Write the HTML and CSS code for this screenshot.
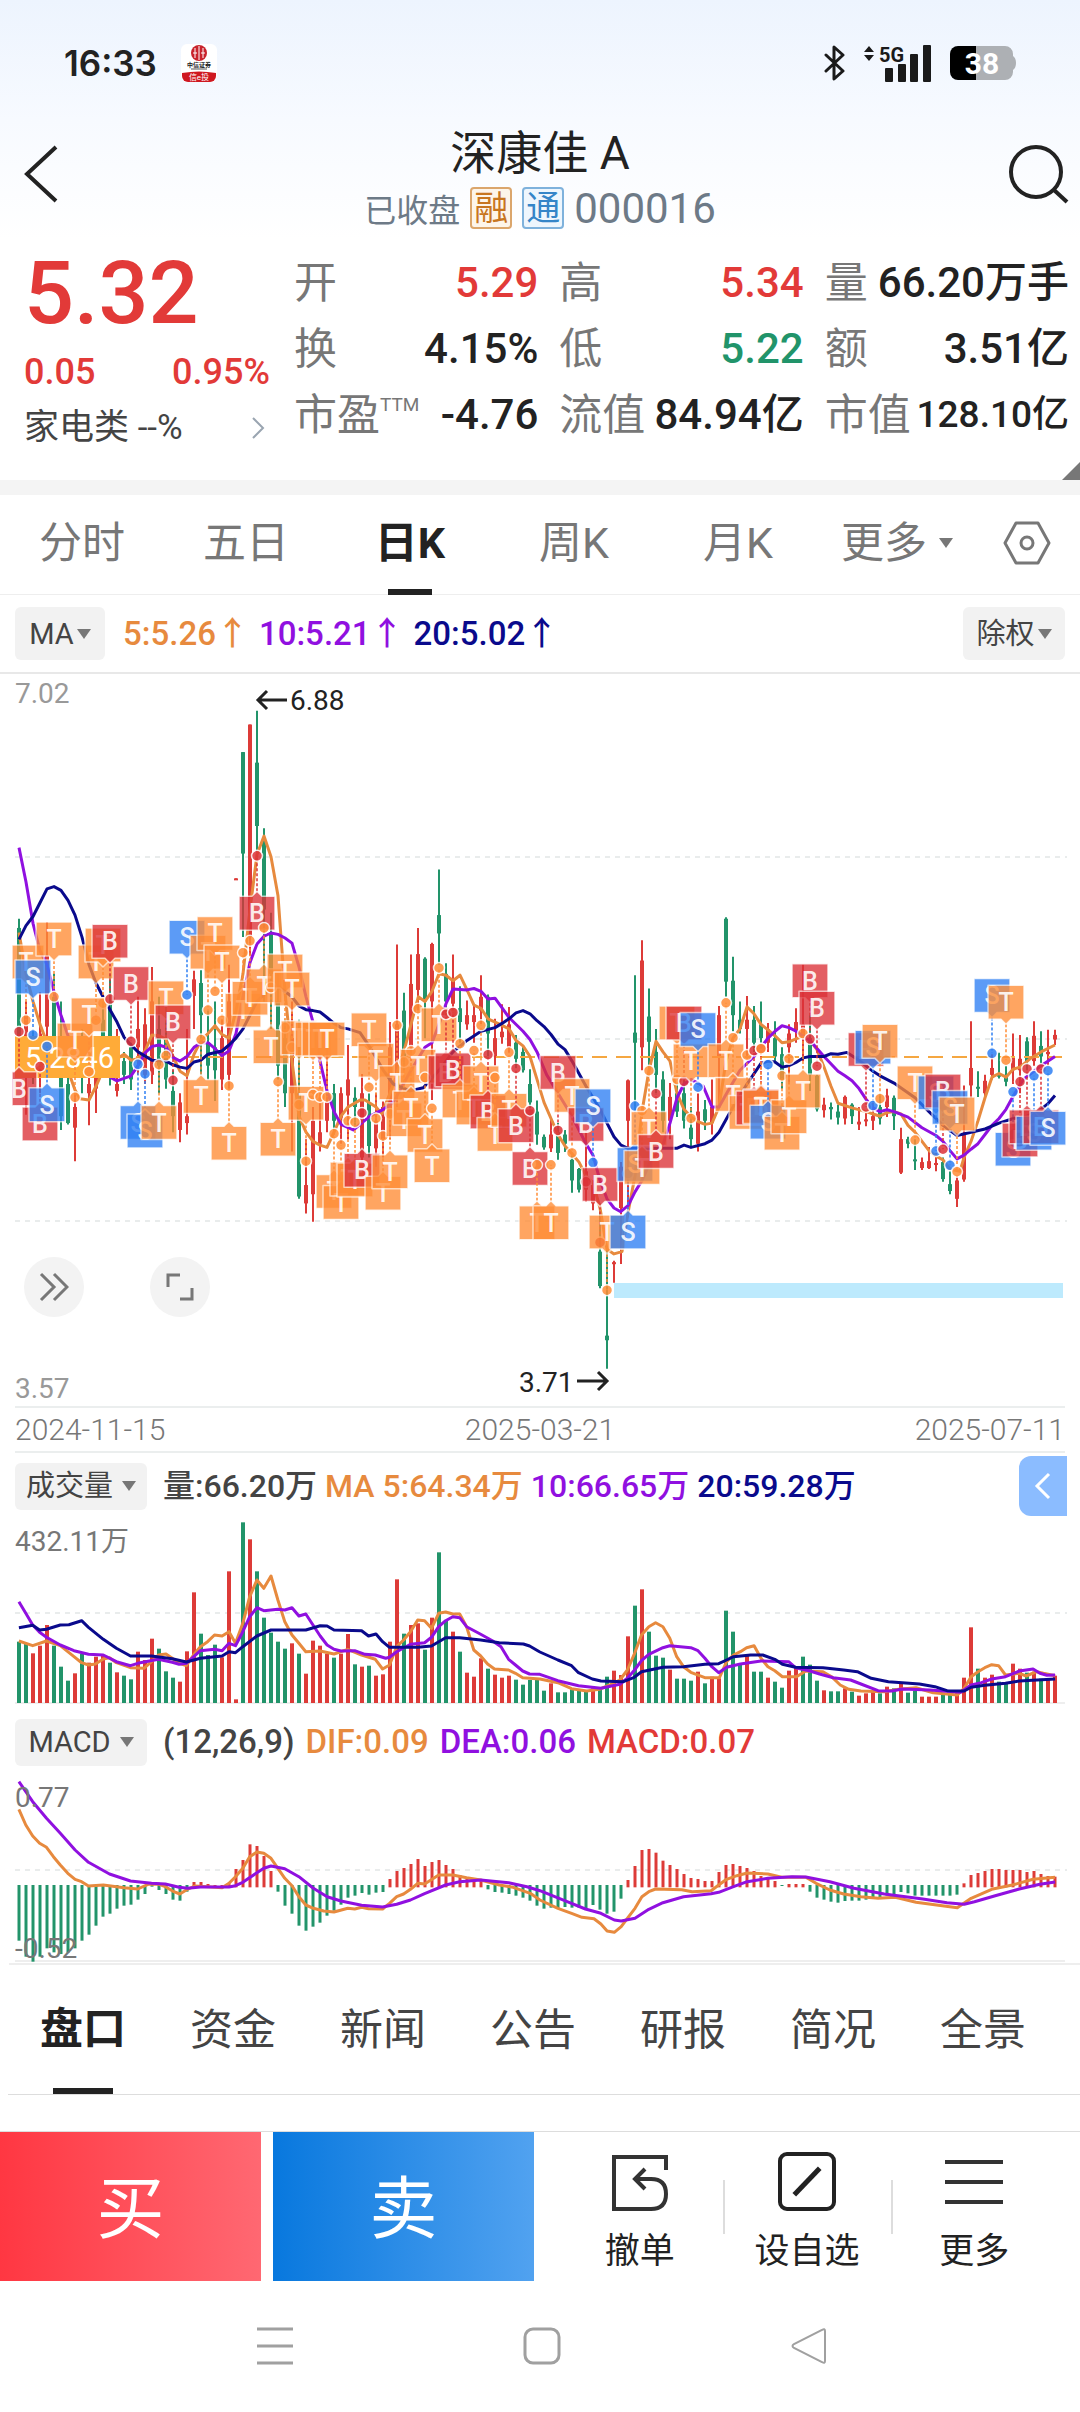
FILE: index.html
```html
<!DOCTYPE html>
<html lang="zh-CN">
<head>
<meta charset="utf-8">
<meta name="viewport" content="width=device-width, initial-scale=1">
<title>深康佳A 000016</title>
<link rel="stylesheet" href="styles.css">
</head>
<body>
<div class="status">
  <span class="clock">16:33</span>
  <svg class="app-logo" viewBox="0 0 36 38" width="36" height="38" aria-hidden="true">
    <rect width="36" height="38" rx="6" fill="#fff"/>
    <circle cx="18" cy="9" r="8" fill="#c8232c"/>
    <path d="M14 4v10M18 2v14M22 4v10M12 9h4M20 9h4" stroke="#fff" stroke-width="1"/>
    <text x="18" y="23" font-size="6" text-anchor="middle" font-weight="700" fill="#222">中信证券</text>
    <path d="M10 25h16" stroke="#555" stroke-width="1"/>
    <path d="M1 29q17 -3 34 0v3a6 6 0 0 1-6 6H7a6 6 0 0 1-6-6z" fill="#cf1820"/>
    <text x="18" y="36" font-size="8" text-anchor="middle" fill="#fff">信e投</text>
  </svg>
  <div class="status-right">
    <svg viewBox="0 0 22 38" width="22" height="38" aria-hidden="true"><path d="M2 11l17 16-9 8V3l9 8L2 27" fill="none" stroke="#1a1a1a" stroke-width="3" stroke-linejoin="round" stroke-linecap="round"/></svg>
    <svg viewBox="0 0 68 38" width="68" height="38" aria-hidden="true">
      <path d="M0 8h10L5 2zM0 11h10L5 17z" fill="#1a1a1a"/>
      <text x="15" y="18" font-size="20" font-weight="700" fill="#1a1a1a">5G</text>
      <g fill="#1a1a1a"><rect x="21" y="24" width="8" height="14" rx="1"/><rect x="34" y="20" width="8" height="18" rx="1"/><rect x="46" y="10" width="8" height="28" rx="1"/><rect x="59" y="1" width="8" height="37" rx="1"/></g>
    </svg>
    <svg viewBox="0 0 66 34" width="66" height="34" aria-hidden="true">
      <path d="M26 0h29a8 8 0 0 1 8 8v2q3 2 3 7t-3 7v2a8 8 0 0 1-8 8H26z" fill="#adb0b4"/>
      <path d="M26 0H8a8 8 0 0 0-8 8v18a8 8 0 0 0 8 8h18z" fill="#000"/>
      <text x="32" y="28" font-size="30" font-weight="700" text-anchor="middle" fill="#fff">38</text>
    </svg>
  </div>
</div>

<header class="header">
  <button class="icon-btn" aria-label="返回"><svg viewBox="0 0 34 58" width="34" height="58"><path d="M32 2L3 29l29 27" fill="none" stroke="#222" stroke-width="4"/></svg></button>
  <div class="heading">
    <h1>深康佳 A</h1>
    <p class="sub"><span class="state">已收盘</span><span class="tag tag-rong">融</span><span class="tag tag-tong">通</span><span class="code">000016</span></p>
  </div>
  <button class="icon-btn" aria-label="搜索"><svg viewBox="0 0 62 60" width="62" height="60"><circle cx="28" cy="28" r="25" fill="none" stroke="#222" stroke-width="4"/><path d="M46 46l13 12" stroke="#222" stroke-width="4"/></svg></button>
</header>

<section class="quote">
  <div class="last">
    <strong class="price up">5.32</strong>
    <div class="change up"><span>0.05</span><span>0.95%</span></div>
    <a class="sector" href="#sector">家电类 --%<svg viewBox="0 0 16 24" width="16" height="24" aria-hidden="true"><path d="M3 2l10 10L3 22" fill="none" stroke="#9aa5b1" stroke-width="2"/></svg></a>
  </div>
  <dl class="stats">
    <div><dt>开</dt><dd class="up">5.29</dd></div>
    <div><dt>高</dt><dd class="up">5.34</dd></div>
    <div><dt>量</dt><dd>66.20万手</dd></div>
    <div><dt>换</dt><dd>4.15%</dd></div>
    <div><dt>低</dt><dd class="down">5.22</dd></div>
    <div><dt>额</dt><dd>3.51亿</dd></div>
    <div><dt>市盈<sup>TTM</sup></dt><dd>-4.76</dd></div>
    <div><dt>流值</dt><dd>84.94亿</dd></div>
    <div><dt>市值</dt><dd class="long">128.10亿</dd></div>
  </dl>
</section>

<nav class="periods">
  <button>分时</button><button>五日</button><button class="on">日K</button><button>周K</button><button>月K</button>
  <button class="more">更多<i class="caret"></i></button>
  <button class="gear" aria-label="图表设置"><svg viewBox="0 0 48 44" width="48" height="44"><path d="M13 2h22l11 20-11 20H13L2 22z" fill="none" stroke="#777" stroke-width="3" stroke-linejoin="round"/><circle cx="24" cy="22" r="6" fill="none" stroke="#777" stroke-width="3"/></svg></button>
</nav>

<div class="indicator ma-row">
  <button class="pick tall">MA<i class="caret"></i></button>
  <span class="c-orange">5:5.26↑</span><span class="c-purple">10:5.21↑</span><span class="c-navy">20:5.02↑</span>
  <button class="pick tall last-pick">除权<i class="caret"></i></button>
</div>

<div class="chart-wrap">
  <svg id="kline" class="chart" viewBox="0 0 1080 732" role="img" aria-label="日K线图"></svg>
  <button class="round expand" aria-label="展开"><svg viewBox="0 0 30 30" width="30" height="30"><path d="M2 2l13 13L2 28M15 2l13 13-13 13" fill="none" stroke="#777" stroke-width="3"/></svg></button>
  <button class="round full" aria-label="全屏"><svg viewBox="0 0 30 30" width="30" height="30"><path d="M3 15V3h12M27 16v11H15" fill="none" stroke="#777" stroke-width="3"/></svg></button>
</div>
<div class="dates"><time>2024-11-15</time><time>2025-03-21</time><time>2025-07-11</time></div>

<div class="indicator vol-row">
  <button class="pick">成交量<i class="caret"></i></button>
  <span>量:66.20万</span><span class="c-orange">MA 5:64.34万</span><span class="c-purple">10:66.65万</span><span class="c-navy">20:59.28万</span>
  <button class="drawer" aria-label="侧栏"><svg viewBox="0 0 18 30" width="18" height="30"><path d="M15 3L3 15l12 12" fill="none" stroke="#fff" stroke-width="3"/></svg></button>
</div>
<svg id="volume" class="chart" viewBox="0 0 1080 192" role="img" aria-label="成交量"></svg>

<div class="indicator macd-row">
  <button class="pick">MACD<i class="caret"></i></button>
  <span>(12,26,9)</span><span class="c-orange">DIF:0.09</span><span class="c-purple">DEA:0.06</span><span class="up">MACD:0.07</span>
</div>
<svg id="macd" class="chart" viewBox="0 0 1080 192" role="img" aria-label="MACD"></svg>

<nav class="sections">
  <button class="on">盘口</button><button>资金</button><button>新闻</button><button>公告</button><button>研报</button><button>简况</button><button>全景</button>
</nav>

<footer class="actions">
  <button class="trade buy">买</button>
  <button class="trade sell">卖</button>
  <div class="tools">
    <button><svg viewBox="0 0 60 60" width="60" height="60"><path d="M56 18V5H4v52h37q15 0 15-15t-15-15H27" fill="none" stroke="#333" stroke-width="4"/><path d="M35 17L25 27l10 10" fill="none" stroke="#333" stroke-width="4"/></svg>撤单</button>
    <button><svg viewBox="0 0 60 60" width="60" height="60"><rect x="3" y="2" width="54" height="55" rx="7" fill="none" stroke="#222" stroke-width="4"/><path d="M19 41l22-23" stroke="#222" stroke-width="5" stroke-linecap="square"/></svg>设自选</button>
    <button><svg viewBox="0 0 60 60" width="60" height="60"><path d="M1 10h58M1 30h58M1 50h58" stroke="#333" stroke-width="4"/></svg>更多</button>
  </div>
</footer>

<nav class="system">
  <button aria-label="任务"><svg viewBox="0 0 38 38" width="38" height="38"><path d="M1 2h36M1 19h36M1 36h36" stroke="#a0a0a0" stroke-width="3"/></svg></button>
  <button aria-label="主页"><svg viewBox="0 0 38 38" width="38" height="38"><rect x="2" y="2" width="34" height="34" rx="8" fill="none" stroke="#a0a0a0" stroke-width="3"/></svg></button>
  <button aria-label="返回"><svg viewBox="0 0 38 38" width="38" height="38"><path d="M35 4v30q0 3-3 1L4 21q-3-2 0-4L32 3q3-2 3 1z" fill="none" stroke="#a0a0a0" stroke-width="2"/></svg></button>
</nav>
<script src="chart.js"></script>
</body>
</html>
```
FILE: styles.css
```css
* { box-sizing: border-box; }
body {
  margin: 0;
  background: #fff linear-gradient(#edf4fe, #f7faff 120px, #fff 240px) no-repeat;
  background-size: 100% 240px;
  color: #222;
  font-family: Roboto, "Noto Sans CJK SC", sans-serif;
}
button { border: 0; padding: 0; background: none; color: inherit; font: inherit; }
svg { display: block; }
h1, p, dl, dd { margin: 0; }
.up { color: #e23a38; }
.down { color: #21946a; }
.c-orange { color: #e78a3e; }
.c-purple { color: #9010e0; }
.c-navy { color: #0a0a8c; }
.caret {
  display: block;
  border: 7px solid transparent;
  border-top: 10px solid #777;
  border-bottom: 0;
}

.status { display: flex; align-items: center; gap: 24px; height: 126px; padding: 0 64px; }
.clock { font: 600 35px/40px Inter, sans-serif; }
.status-right { display: flex; align-items: center; gap: 18px; margin-left: auto; }

.header { display: flex; justify-content: space-between; height: 120px; padding: 0 10px; }
.icon-btn { width: 62px; height: 96px; }
.icon-btn svg { margin: 0 auto; }
.heading { text-align: center; }
h1 { font-size: 46px; line-height: 54px; font-weight: 400; }
.sub { display: flex; align-items: center; justify-content: center; gap: 10px; height: 56px; color: #6d7a87; }
.state { font-size: 32px; }
.tag { width: 42px; height: 42px; border: 2px solid; border-radius: 4px; font-size: 34px; line-height: 38px; }
.tag-rong { color: #c8761f; border-color: #dba66c; background: #fdf5ea; }
.tag-tong { color: #3585c8; border-color: #7fb2dc; background: #eef6fd; }
.code { font-size: 42px; }

.quote {
  display: grid;
  grid-template-columns: 246px 1fr;
  gap: 24px;
  height: 249px;
  padding: 4px 11px 0 24px;
  border-bottom: 15px solid #f4f4f4;
  position: relative;
}
.quote::after {
  content: "";
  position: absolute;
  right: 0;
  bottom: 0;
  border: 9px solid transparent;
  border-right-color: #777;
  border-bottom-color: #777;
}
.price { display: block; font-size: 88px; line-height: 86px; font-weight: 500; }
.change { display: flex; justify-content: space-between; font-size: 36px; line-height: 72px; font-weight: 500; }
.sector { display: flex; align-items: center; justify-content: space-between; padding-right: 4px; color: #444; font-size: 35px; line-height: 40px; text-decoration: none; }
.stats { display: grid; grid-template-columns: repeat(3, 1fr); grid-auto-rows: 66px; column-gap: 21px; }
.stats div { display: flex; justify-content: space-between; align-items: center; white-space: nowrap; }
dt { color: #777; font-size: 43px; line-height: 66px; display: flex; }
dt sup { font-size: 19px; line-height: 46px; }
dd { font-size: 42px; line-height: 66px; font-weight: 500; }
dd.long { font-size: 37px; }

.periods {
  display: grid;
  grid-template-columns: repeat(5, 164fr) 154fr 106fr;
  height: 100px;
  color: #777;
  font-size: 43px;
  line-height: 96px;
  border-bottom: 1px solid #eee;
}
.periods button { padding-bottom: 4px; }
.on { color: #222; font-weight: 700; display: flex; justify-content: center; position: relative; }
.on::after { content: ""; position: absolute; bottom: 0; width: 44px; height: 6px; background: #222; }
.more { display: flex; align-items: center; justify-content: center; gap: 12px; }
.gear { display: flex; align-items: center; justify-content: center; }

.indicator { display: flex; align-items: center; gap: 11px; padding-left: 15px; color: #444; font-size: 32px; line-height: 40px; font-weight: 500; white-space: nowrap; }
.pick { display: flex; align-items: center; justify-content: center; gap: 9px; width: 132px; height: 47px; margin-right: 5px; border-radius: 6px; background: #f2f2f2; color: #444; font-size: 29px; font-weight: 400; }
.pick.tall { width: 90px; height: 53px; gap: 3px; margin-right: 8px; }
.pick.last-pick { width: 102px; margin: 0 15px 0 auto; }
.ma-row { height: 79px; gap: 10px; font-size: 33px; border-bottom: 2px solid #e8e8e8; }
.vol-row { height: 66px; gap: 8px; }
.vol-row .pick { margin-right: 8px; }
.macd-row { height: 62px; font-size: 33px; }
.drawer { display: flex; align-items: center; justify-content: center; width: 48px; height: 60px; margin: 0 13px 0 auto; border-radius: 12px 0 0 12px; background: #8bbcff; }

.chart-wrap { position: relative; }
.chart { width: 100%; height: auto; }
.round { position: absolute; top: 583px; display: flex; align-items: center; justify-content: center; width: 60px; height: 60px; border-radius: 50%; background: #f3f3f3; }
.expand { left: 24px; }
.full { left: 150px; }
.dates { display: flex; justify-content: space-between; margin: 0 15px; height: 47px; border: solid #ebeeee; border-width: 2px 0; color: #777; font-size: 30px; font-weight: 300; line-height: 43px; }

.sections { display: grid; grid-template-columns: repeat(7, 1fr); height: 130px; margin: 0 0 36px 8px; padding-right: 22px; border-bottom: 1px solid #ddd; color: #444; font-size: 43px; }
.sections button { line-height: 128px; }
.sections .on { color: #222; }
.sections .on::after { width: 60px; }

.actions { display: grid; grid-template-columns: 261fr 261fr 534fr; gap: 12px; height: 150px; border-top: 1px solid #ddd; }
.trade { padding-top: 8px; color: #fff; font-size: 68px; line-height: 141px; }
.buy { background: linear-gradient(90deg, #ff3742, #ff6872); }
.sell { background: linear-gradient(90deg, #0878de, #51a2f0); }
.tools { display: grid; grid-template-columns: repeat(3, 1fr); padding: 0 22px 0 10px; align-items: center; }
.tools button { display: flex; flex-direction: column; align-items: center; gap: 16px; padding-top: 14px; font-size: 35px; line-height: 48px; }
.tools button + button { background: linear-gradient(#ddd, #ddd) no-repeat 0 50% / 2px 54px; }

.system { display: grid; grid-template-columns: repeat(3, 267px); justify-content: center; height: 131px; padding: 0 0 2px 4px; }
.system button { display: flex; align-items: center; justify-content: center; }
```
FILE: chart.js
```js
const RED = '#dd3b38', GREEN = '#22946a';
const ORANGE = '#e78a3e', PURPLE = '#9010e0', NAVY = '#0a0a8c';

const line = (pts, color) =>
  `<polyline points="${pts}" fill="none" stroke="${color}" stroke-width="3" stroke-linejoin="round"/>`;
// Turns "x,y x,y ..." samples into chart coordinates.
const scale = (raw, fx, fy) => raw.trim().split(/\s+/).map(p => {
  const [x, y] = p.split(',').map(Number);
  return fx(x).toFixed(1) + ',' + fy(y).toFixed(1);
}).join(' ');
const grid = y => `<path d="M15 ${y}H1067" stroke="#e9ecec" stroke-width="2" stroke-dasharray="5 5"/>`;
const label = (x, y, t, c = '#777') => `<text x="${x}" y="${y}" font-size="28" fill="${c}">${t}</text>`;

/* ---------- daily candles ---------- */
const ky = v => v / 2.178 + 6;
const kx = v => v / 3;
const col = i => 19 + 7 * i;

// colour, high, body top, body bottom, low
const candles = `g520,540,800,830 r700,730,850,947 g760,790,860,880 r680,770,860,900 r527,600,755,860 g640,690,820,850 g700,860,950,980 g780,880,965,968
r900,930,975,1048 g760,790,860,900 r820,880,900,970 r780,820,890,943 g700,740,800,830 g640,700,860,883 r760,880,895,907 g810,830,860,880
g790,800,870,893 r690,760,800,860 r715,750,860,880 r625,700,860,880 g690,760,840,900 g700,780,870,890 g850,895,950,985 r900,920,980,1007
r760,950,965,990 r633,652,688,760 g632,660,730,860 g720,790,840,870 g700,800,850,917 r740,780,870,893 r620,700,860,890 r432,432,435,435
g157,157,378,560 r97,97,560,600 g67,180,318,375 g323,345,500,700 g507,550,640,760 g640,700,840,870 g740,780,900,930 r700,780,900,1027
g740,900,1125,1130 r1000,1100,1140,1162 r930,960,1120,1180 r900,985,1010,1027 r760,920,960,985 g880,900,960,990 r887,900,960,1010 r795,870,905,1000
g887,910,930,980 r858,900,1040,1060 g900,920,1015,1040 r900,960,1020,1060 r918,930,1000,1040 r745,800,950,1000 r576,750,900,930 g681,720,820,850
r598,662,800,830 r540,597,675,720 g604,607,700,780 r572,575,700,915 g413,512,552,620 g617,640,700,730 r598,650,705,720 g667,715,745,790
r698,730,750,762 r710,730,745,790 r643,690,720,750 g685,690,770,820 r738,780,820,840 r706,766,778,792 r712,750,800,812 g773,790,825,845
g800,810,850,855 g848,880,920,937 g916,940,990,1012 g990,995,1018,1023 r955,990,1020,1028 g965,985,1030,1045 g980,990,1010,1028 g1035,1045,1090,1117
g1063,1065,1110,1116 r980,1070,1110,1137 r1090,1100,1140,1155 g1140,1245,1320,1325 g1240,1428,1438,1500 r1265,1268,1270,1313 r1050,1060,1150,1272 r870,872,960,1170
g643,768,790,940 r567,611,800,850 g672,733,788,860 g760,810,860,900 g852,870,960,985 r878,908,960,1000 g880,900,940,952 g870,900,960,977
g930,975,1000,1015 r900,940,1010,1027 g915,935,960,980 r870,930,965,990 r710,730,820,930 g517,520,657,690 g603,655,730,765 g700,740,760,770
r688,740,760,820 g710,740,790,810 g700,750,780,800 r747,760,790,810 g743,780,820,830 g800,815,870,890 r750,770,800,880 r715,745,765,790
r620,750,780,830 g730,780,860,895 g860,862,935,940 r910,925,937,953 g920,930,935,957 g925,940,953,968 r905,908,955,968 g922,925,950,967
r930,962,968,980 r940,957,960,972 r920,950,960,980 g900,930,955,968 r890,905,930,952 g905,910,950,980 r975,1000,1073,1076 g995,1000,1010,1020
g1000,1044,1047,1067 r1040,1050,1063,1067 r1017,1048,1063,1065 r1030,1052,1055,1070 g1040,1050,1087,1093 g1070,1098,1113,1120 r1080,1090,1130,1148 r883,990,1088,1093
r743,845,883,910 g852,886,890,908 r860,873,900,910 r815,845,860,870 g812,858,864,868 g840,860,875,885 r770,820,850,880 r773,825,850,900
g778,787,830,850 r743,775,830,840 g765,797,820,840 r762,810,815,840 r762,773,783,795`.trim().split(/\s+/);

const ma5 = `57,550 78,640 99,700 120,750 141,790 162,790 183,820 204,850 225,893 240,912 267,915 288,885 309,850 340,830 372,815 393,828 414,825 435,808 456,773 477,775 498,782 519,820 540,852 561,862 582,815 603,785 624,770 645,753 666,772 687,780 708,720 729,640 750,500 771,380 792,340 813,385 834,470 855,680 876,830 897,950 918,985 939,1005 960,1013 981,1018 1002,985 1023,950 1044,930 1080,915 1095,915 1128,930 1145,945 1170,900 1190,860 1215,800 1233,750 1255,690 1275,700 1296,678 1317,640 1338,643 1359,655 1380,643 1401,675 1422,708 1443,715 1464,738 1500,750 1527,760 1548,785 1569,797 1590,820 1611,870 1632,920 1653,955 1674,990 1695,1015 1716,1032 1737,1050 1758,1080 1779,1095 1800,1150 1821,1240 1842,1250 1866,1245 1884,1160 1905,1080 1926,940 1947,850 1968,787 1989,810 2010,830 2031,900 2052,935 2073,952 2094,962 2115,968 2136,965 2157,930 2178,830 2199,780 2220,760 2241,712 2262,727 2283,750 2304,762 2325,775 2346,790 2367,788 2409,775 2430,785 2451,805 2472,843 2493,885 2514,922 2556,932 2598,940 2640,950 2661,942 2682,940 2703,945 2724,970 2745,985 2766,1005 2787,1025 2808,1037 2829,1045 2850,1065 2880,1070 2892,1040 2913,1005 2934,960 2955,910 2976,865 2997,857 3018,865 3039,848 3060,843 3090,825 3123,810 3165,795`;
const ma10 = `57,365 78,440 99,530 120,590 141,620 162,680 183,730 204,775 240,810 288,840 330,865 351,873 393,862 414,840 435,812 456,798 477,795 498,800 519,822 540,830 561,820 582,800 603,790 624,790 645,803 666,818 687,808 708,770 729,690 750,615 771,575 792,558 813,551 834,554 855,562 876,573 897,625 918,690 939,745 960,830 981,895 1002,940 1023,968 1060,980 1080,968 1110,950 1150,935 1180,920 1233,850 1275,800 1296,790 1317,750 1338,705 1359,673 1401,675 1422,672 1443,678 1464,695 1485,693 1527,735 1569,765 1590,783 1611,810 1640,860 1674,900 1716,950 1737,980 1758,1010 1779,1035 1800,1090 1821,1130 1842,1150 1862,1158 1884,1145 1905,1115 1926,1090 1950,1050 1990,1010 2010,965 2031,910 2052,880 2073,870 2110,885 2136,930 2157,930 2180,900 2220,850 2262,820 2304,780 2325,765 2346,753 2367,757 2388,765 2430,785 2472,820 2514,852 2535,862 2556,873 2577,890 2598,913 2619,932 2640,940 2661,936 2682,940 2724,952 2766,975 2808,992 2829,1005 2850,1025 2871,1043 2892,1035 2913,1022 2934,1010 2955,990 2976,970 2997,955 3018,935 3037,910 3070,870 3123,840 3165,820`;
const ma20 = `57,565 78,535 99,515 120,485 141,455 162,450 183,458 204,480 225,512 246,560 267,620 288,660 309,690 330,718 351,745 372,778 393,795 414,810 456,828 498,830 519,838 540,843 561,846 582,832 603,828 624,815 666,808 687,795 708,780 729,760 771,700 813,670 834,667 876,690 897,710 918,718 939,720 960,723 981,735 1002,748 1023,757 1044,760 1080,768 1110,800 1150,850 1180,880 1230,895 1270,888 1317,850 1359,810 1401,785 1443,765 1485,757 1506,748 1527,738 1548,725 1569,720 1590,727 1611,742 1632,755 1653,772 1674,793 1695,805 1716,830 1758,885 1800,935 1821,965 1842,995 1863,1013 1884,1020 1980,1020 2030,1020 2052,1013 2073,1018 2115,1010 2136,1002 2157,985 2199,930 2241,880 2283,835 2304,830 2325,832 2346,843 2367,840 2388,833 2409,823 2430,820 2472,820 2493,814 2514,815 2541,811 2580,830 2619,852 2640,862 2682,878 2745,910 2787,940 2829,970 2871,992 2913,985 2955,978 2997,965 3040,955 3081,950 3123,935 3145,922 3165,905`;

// letter, column, box top, dot
const trades = `T1,577,741 B0,853,766 B3,930,842 S2,610,773 S4,888,798 T5,527,690 T8,747,909 T11,577,741 T12,540,704 T10,692,853 B13,532,695 B16,624,787 S17,927,837 S18,945,858 T20,927,838 T21,655,818 B22,708,872
S24,523,686 T26,870,783 T27,556,719 T28,515,678 T29,577,741 T30,972,884 T32,682,594 T33,656,568 B34,471,383 T35,629,540 T36,762,670 T37,963,875 T38,597,757 T39,636,800 T40,742,925 T41,885,1048 T42,745,903 T43,745,908 T44,745,908
T45,1077,988 T46,1101,1013 T47,1050,960 T48,1052,963 B49,1031,943 T50,725,887 T51,791,955 T52,1081,993 T53,1034,945 T54,840,752 T55,921,832 T56,895,808 T57,804,716 T58,955,866 T59,1021,933 T60,714,627
B61,818,728 B62,812,724 T63,880,792 T65,895,807 T66,840,752 B67,904,816 T68,953,866 T70,900,811 B71,934,846 B73,1027,938 T74,1145,1056 T76,1145,1056 B77,818,981 T79,868,1030 B81,931,1093 S82,890,1051 B83,1062,1225 T84,1165,1329
S87,1165,1075 S88,1018,928 T89,1025,938 T90,940,851 B91,990,901 T94,710,870 B95,710,874 T96,792,955 S97,724,887 T101,792,703 T102,866,779 T104,905,817 B105,895,807 B106,891,803 T106,893,803 S107,926,838 T109,950,862 T110,914,825 T112,858,770
B113,618,782 B114,678,841 B121,768,930 S122,763,927 T123,750,912 T128,840,1002 S131,862,1026 B132,858,1022 S133,894,1057 T134,908,1071 S139,650,813 T141,665,828
S142,985,897 B143,965,875 B144,936,847 S145,950,862 B146,936,847 S147,939,851`.trim().split(/\s+/);
const fills = { T: '#ff8d36', B: '#dc3238', S: '#2f80f4' };

function marker(t) {
  const kind = t[0];
  const [i, top, dot] = t.slice(1).split(',').map(Number);
  const x = col(i), y = ky(top), d = ky(dot);
  const below = dot > top, b = y + 34;
  const left = Math.max(12, x - 18);
  const body = below
    ? `M${left} ${y}H${x + 18}V${b}H${x + 5}L${x} ${b + 5}L${x - 5} ${b}H${left}Z`
    : `M${left} ${y}H${x - 5}L${x} ${y - 5}L${x + 5} ${y}H${x + 18}V${b}H${left}Z`;
  return `<g fill="${fills[kind]}">
    <path d="M${x} ${below ? b + 5 : y - 5}V${d}" stroke="${fills[kind]}" stroke-width="2" stroke-dasharray="3 2" opacity=".75"/>
    <path d="${body}" opacity=".78" stroke="#fff" stroke-opacity=".8" stroke-width="1.5" stroke-linejoin="round"/>
    <circle cx="${x}" cy="${d}" r="5.5" opacity=".85" stroke="#fff" stroke-width="1.5"/>
    <text x="${x}" y="${y + 26}" text-anchor="middle" font-size="25" font-weight="500" fill="#fff" fill-opacity=".9">${kind}</text></g>`;
}

document.getElementById('kline').innerHTML =
  [183, 365, 547].map(grid).join('') +
  candles.map((c, i) => {
    const [h, t, b, l] = c.slice(1).split(',').map(v => ky(+v));
    const x = col(i), color = c[0] === 'r' ? RED : GREEN;
    return `<path d="M${x} ${h}V${l}" stroke="${color}" stroke-width="2"/><rect x="${x - 2}" y="${t}" width="4" height="${Math.max(2, b - t)}" fill="${color}"/>`;
  }).join('') +
  '<path d="M16 383H1062" stroke="#f5a741" stroke-width="2" stroke-dasharray="15 9"/>' +
  line(scale(ma5, kx, ky), ORANGE) + line(scale(ma10, kx, ky), PURPLE) + line(scale(ma20, kx, ky), NAVY) +
  '<rect x="614" y="609" width="449" height="15" fill="#bdeafd"/>' +
  '<rect x="15" y="362" width="105" height="42" fill="#ffab38"/>' +
  '<text x="25" y="394" font-size="29" fill="#fff">5.2846</text>' +
  trades.map(marker).join('') +
  label(15, 29, '7.02', '#999') + label(15, 724, '3.57', '#999') +
  label(290, 36, '6.88', '#222') + label(519, 718, '3.71', '#222') +
  '<path d="M287 26H259M267 17l-9 9 9 9M577 707h28M598 698l9 9-9 9" fill="none" stroke="#222" stroke-width="3"/>';

/* ---------- volume ---------- */
const bx = v => v / 2.904;
const vy = v => v / 3 - 19;
const step = i => 19 + 7 * i;
const volumes = `g425 g432 r460 r437 r375 g437 g500 g542 r520 g462 r488 r470 r468 g488 r517 g527 g538 r455 r480 r416 g446 g514 g533 r545 r454 r277 g401 g465 g434 r472 r214 r598 g67 r118 g214 g353 g398 g425 g446 r430 g461 r521 r422 r437 r461 g473 r461 r402 g493 r500 g497 r527 r523 r425 r238 g401 r375 r370 g449 r353 g157 g362 r395 g455 r518 r530 r475 g506 r524 r533 r527 g539 g554 g540 g540
g572 r550 g577 g577 g568 g570 g572 r565 g567 g530 r512 r525 r409 g317 r268 g395 g467 g473 r509 g536 g536 g542 r515 g550 r530 r535 g332 g395 g490 r467 g515 g515 r533 g545 g563 r512 r500 g470 g494 g542 r571 g574 g574 r565 g575 r587 r580 r575 g580 r560 g565 r552 g578 g572 r590 r590 r590 g585 g585 r575 r533 r382 g506 r533 r524 g545 g548 r491 r506 g518 r515 g536 r540 r527`.trim().split(/\s+/);
const v5 = `55,423 95,437 135,423 175,437 215,470 237,488 257,495 277,492 300,477 318,473 338,488 379,503 418,505 440,485 460,465 482,462 500,475 520,490 541,497 562,465 582,440 603,425 623,405 645,408 665,395 684,430 705,370 725,290 746,240 766,265 787,228 807,300 827,365 848,405 868,430 888,455 930,453 970,462 1010,448 1050,465 1090,478 1111,507 1131,495 1152,440 1172,420 1192,395 1213,360 1233,362 1253,385 1274,340 1294,336 1315,342 1335,342 1355,380 1376,450 1396,468 1416,492 1436,507 1477,510 1497,520 1518,533 1568,537 1620,548 1660,566 1704,573 1740,568 1770,555 1800,540 1822,510 1843,460 1863,405 1884,380 1904,368 1925,380 1945,415 1965,470 1985,500 2006,517 2047,533 2089,533 2110,485 2130,465 2150,455 2168,443 2190,437 2210,475 2230,500 2250,512 2272,530 2313,530 2340,513 2390,515 2415,530 2440,555 2465,568 2500,573 2568,575 2610,568 2660,563 2710,578 2780,585 2800,565 2820,530 2840,515 2860,503 2880,494 2900,497 2920,525 2960,520 2980,528 3010,515 3030,520 3064,527`;
const v10 = `55,305 75,340 95,375 115,397 135,412 175,435 215,452 257,463 300,465 338,485 379,497 400,490 460,478 500,487 520,493 541,490 582,452 623,448 645,452 665,430 684,437 705,395 725,350 746,323 766,332 807,328 827,330 848,323 868,348 888,342 909,375 930,408 950,435 970,448 990,453 1030,452 1060,463 1090,465 1120,475 1131,472 1152,455 1192,433 1233,428 1253,412 1274,380 1294,362 1315,350 1335,353 1355,380 1396,403 1430,422 1455,440 1477,478 1497,495 1518,513 1538,522 1568,523 1620,542 1680,557 1745,565 1800,553 1822,535 1843,510 1863,482 1884,463 1925,443 1945,437 2006,443 2027,452 2047,475 2067,500 2087,518 2110,502 2150,492 2210,483 2290,485 2310,503 2350,512 2380,522 2420,533 2470,540 2500,552 2550,572 2590,573 2620,567 2700,570 2790,577 2820,555 2850,548 2880,537 2920,530 2960,513 3000,507 3020,520 3040,526 3064,525`;
const v20 = `55,383 95,376 115,390 135,388 175,375 200,374 237,362 257,382 300,418 338,445 379,468 440,468 500,476 541,486 582,475 645,468 665,455 684,458 705,440 746,408 787,390 888,390 930,377 950,378 970,390 1050,392 1070,408 1092,402 1111,425 1131,442 1213,442 1253,438 1294,413 1335,413 1396,420 1450,428 1520,432 1538,438 1568,456 1620,480 1660,497 1680,518 1720,537 1745,543 1810,545 1840,533 1863,515 1925,502 1985,500 2047,493 2087,491 2110,480 2130,470 2180,465 2215,465 2250,478 2272,493 2310,502 2390,503 2450,510 2490,515 2530,535 2580,545 2670,552 2715,560 2750,572 2800,573 2820,562 2860,556 2920,550 2960,543 3064,537`;

document.getElementById('volume').innerHTML =
  grid(94) + '<path d="M15 184H1065" stroke="#eee" stroke-width="2"/>' +
  volumes.map((v, i) => {
    const y = vy(+v.slice(1));
    return `<rect x="${step(i) - 2}" y="${y}" width="4" height="${184 - y}" fill="${v[0] === 'r' ? RED : GREEN}"/>`;
  }).join('') +
  line(scale(v5, bx, vy), ORANGE) + line(scale(v10, bx, vy), PURPLE) + line(scale(v20, bx, vy), NAVY) +
  label(15, 32, '432.11万');

/* ---------- MACD ---------- */
const my = v => v / 3 - 273;
const bars = `1322 1370 1385 1370 1345 1357 1362 1358 1345 1322 1304 1277 1250 1241 1226 1217 1214 1199 1182 1160 1170 1182 1199 1202 1175 1146 1146 1152 1155 1155 1150 1107 1080 1033 1038 1068 1113 1175 1217 1241 1277 1292 1280 1268 1247 1232 1214 1193 1187 1179 1184 1178 1176 1137 1113 1104 1092 1077 1098 1086 1080 1095 1107 1125 1131 1137 1143 1168 1176 1178 1182 1187 1193 1202 1217 1226 1223 1226 1221 1223 1223 1226 1215 1229 1241 1235 1196 1140 1098 1050 1047 1058 1082 1095 1107 1122 1134 1137 1143 1143 1116 1095 1092 1098 1104 1113 1128 1137 1143 1158 1152 1152 1152 1175 1193 1199 1205 1208 1203 1202 1202 1199 1195 1193 1187 1184 1176 1180 1187 1187 1187 1187 1187 1187 1184 1150 1125 1119 1113 1107 1107 1110 1110 1110 1116 1113 1122 1128 1130`.split(' ').map(Number);
const dif = `55,928 75,975 95,1008 115,1030 135,1042 155,1070 175,1095 197,1120 218,1138 237,1145 257,1158 300,1155 360,1163 400,1167 430,1153 460,1152 480,1160 505,1175 522,1182 541,1170 565,1158 605,1160 645,1163 665,1150 684,1130 705,1105 725,1070 746,1056 766,1060 787,1075 807,1105 827,1135 848,1157 868,1190 888,1215 910,1225 940,1233 970,1236 1010,1225 1030,1227 1050,1222 1070,1226 1111,1227 1131,1210 1152,1190 1172,1182 1192,1168 1213,1150 1233,1152 1274,1125 1315,1125 1355,1133 1396,1140 1450,1155 1490,1162 1540,1180 1568,1200 1620,1225 1660,1240 1690,1252 1725,1256 1745,1272 1763,1293 1784,1297 1804,1280 1824,1252 1844,1225 1864,1190 1884,1175 1904,1167 1980,1169 2010,1175 2065,1172 2087,1155 2110,1138 2140,1127 2170,1119 2230,1122 2270,1132 2340,1132 2370,1150 2410,1170 2450,1182 2500,1190 2550,1195 2600,1192 2660,1207 2720,1215 2780,1223 2820,1195 2880,1168 2940,1155 3000,1138 3064,1132`;
const dea = `55,845 95,905 135,955 175,1000 218,1050 257,1087 318,1122 379,1143 440,1150 480,1152 520,1162 545,1165 582,1161 665,1161 684,1157 705,1147 746,1118 766,1105 787,1098 827,1106 868,1130 909,1164 950,1190 990,1203 1050,1216 1111,1221 1152,1213 1192,1200 1233,1181 1294,1155 1335,1145 1396,1140 1477,1148 1530,1160 1568,1172 1640,1202 1700,1227 1745,1240 1784,1260 1804,1263 1844,1255 1884,1228 1925,1208 1985,1190 2065,1181 2087,1177 2130,1160 2170,1145 2230,1135 2300,1130 2340,1131 2410,1145 2480,1165 2568,1182 2680,1197 2750,1208 2800,1213 2830,1205 2890,1187 2960,1167 3020,1153 3064,1146`;

document.getElementById('macd').innerHTML =
  grid(97) + '<path d="M15 188H1065" stroke="#eee" stroke-width="2"/><path d="M9 191H1080" stroke="#ddd" stroke-width="1"/>' +
  bars.map((v, i) => {
    const up = v < 1158;
    return `<path d="M${step(i)} ${my(up ? 1162 : 1155)}V${my(v)}" stroke="${up ? RED : GREEN}" stroke-width="3"/>`;
  }).join('') +
  line(scale(dif, bx, my), ORANGE) + line(scale(dea, bx, my), PURPLE) +
  label(15, 34, '0.77') + label(15, 185, '-0.52');
```
